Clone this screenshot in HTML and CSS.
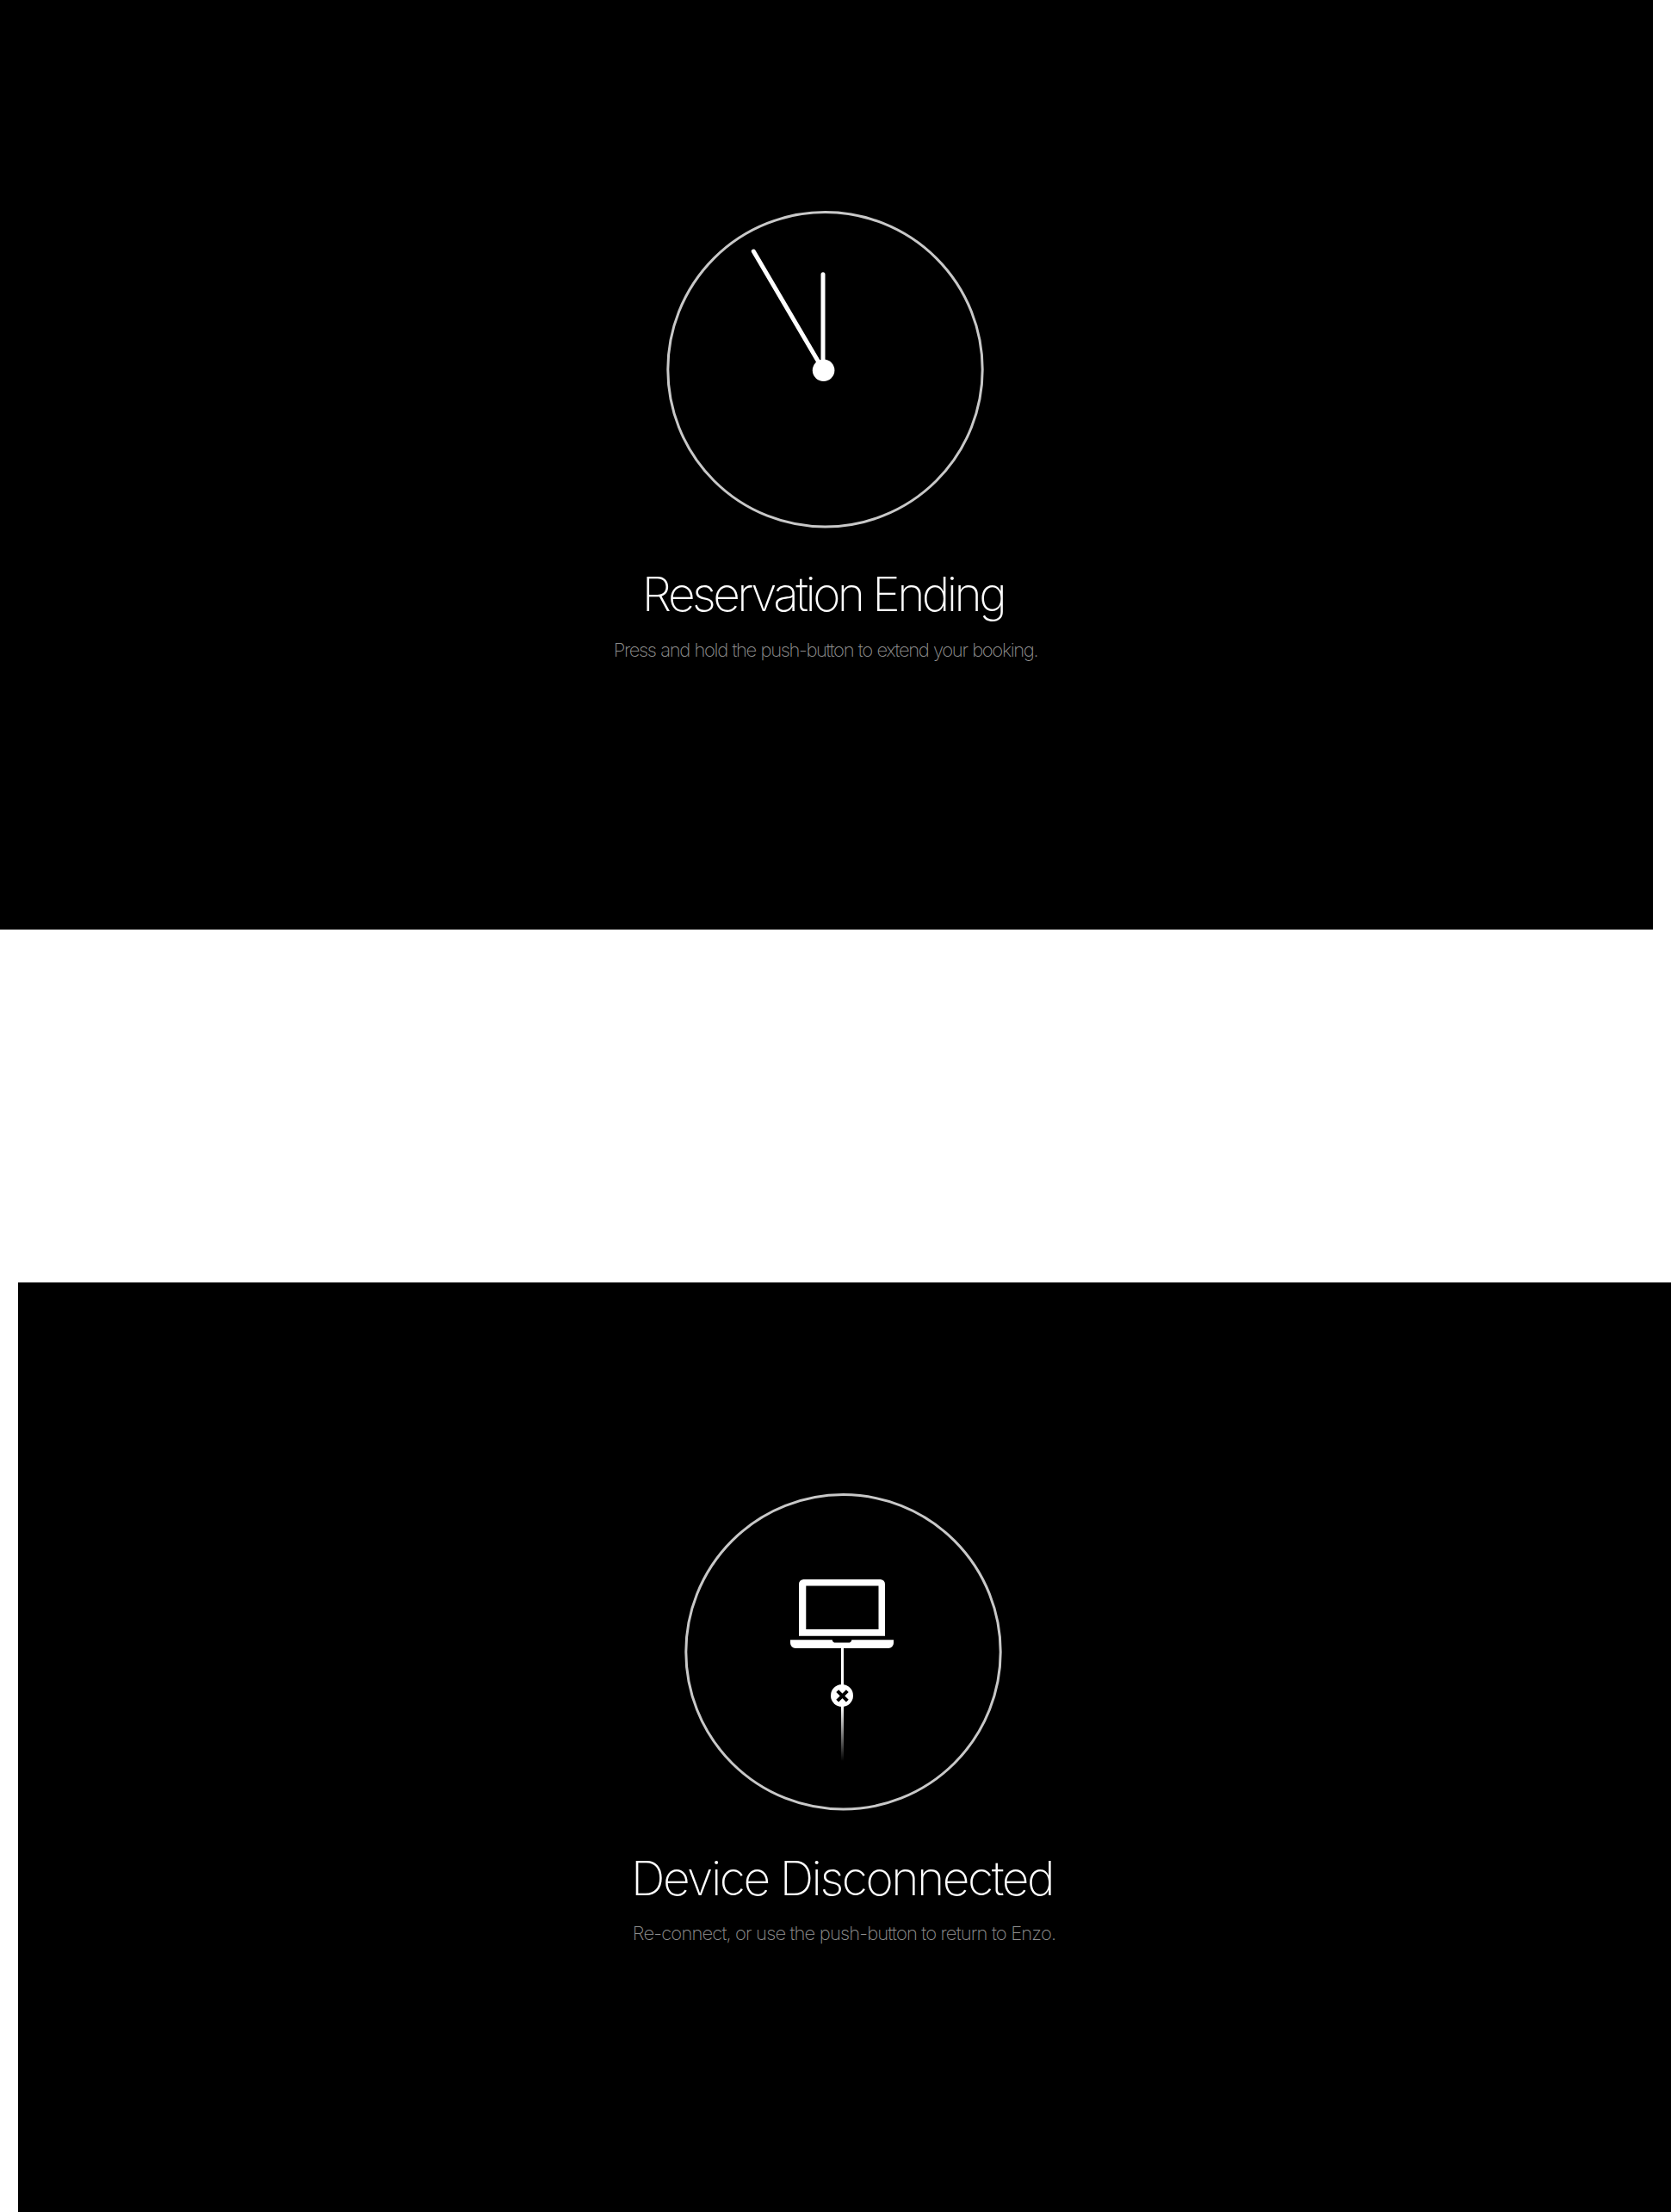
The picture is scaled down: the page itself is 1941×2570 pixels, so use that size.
FILE: index.html
```html
<!DOCTYPE html>
<html lang="en">
<head>
<meta charset="utf-8">
<title>Room display notices</title>
<link rel="stylesheet" href="styles.css">
</head>
<body>
<main class="screens">
  <section class="screen screen-ending">
    <svg class="dial" width="372" height="372" viewBox="0 0 372 372" aria-hidden="true">
      <circle class="ring" cx="185.5" cy="186.3" r="182.7"/>
      <path class="hand" d="M183 187V75.8M183.5 187.3L102.3 49"/>
      <circle cx="183.6" cy="187.3" r="12.8"/>
    </svg>
    <h1 class="title">Reservation Ending</h1>
    <p class="hint">Press and hold the push-button to extend your booking.</p>
  </section>
  <section class="screen screen-disconnected">
    <svg class="dial" width="372" height="372" viewBox="0 0 372 372" aria-hidden="true">
      <defs>
        <linearGradient id="fade" x1="0" y1="250" x2="0" y2="313" gradientUnits="userSpaceOnUse">
          <stop offset="0" stop-color="#fff"/>
          <stop offset="1" stop-color="#fff" stop-opacity="0"/>
        </linearGradient>
      </defs>
      <circle class="ring" cx="185.5" cy="186.3" r="182.7"/>
      <path fill-rule="evenodd" d="M139.5 102h89a5.5 5.5 0 0 1 5.5 5.5v60.2H134v-60.2a5.5 5.5 0 0 1 5.5-5.5zM142.3 109.4V160h84.2v-50.6z"/>
      <path d="M124 172.2h48.7q.5 3.4 4 3.4h14.6q3.5 0 4-3.4H244v3.8a6 6 0 0 1-6 6H130a6 6 0 0 1-6-6z"/>
      <rect x="183" y="181" width="3" height="45"/>
      <rect x="183" y="248" width="3" height="65" fill="url(#fade)"/>
      <circle cx="184" cy="237" r="13"/>
      <path class="cross" d="M178.7 231.6l11.6 11.6M190.3 231.6l-11.6 11.6"/>
    </svg>
    <h1 class="title">Device Disconnected</h1>
    <p class="hint">Re-connect, or use the push-button to return to Enzo.</p>
  </section>
</main>
</body>
</html>
```
FILE: styles.css
```css
* { box-sizing: border-box; }
body { margin: 0; background: #fff; }
.screens {
  display: flex;
  flex-direction: column;
  justify-content: space-between;
  width: 1941px;
  height: 2570px;
}
.screen {
  display: flex;
  flex-direction: column;
  align-items: center;
  width: 1920px;
  height: 1080px;
  padding-top: 243px;
  background: #000;
  font-family: Inter, "Liberation Sans", sans-serif;
}
.screen-disconnected { align-self: flex-end; }
.dial {
  display: block;
  flex: none;
  margin-right: 2px;
  fill: #fff;
}
.ring { fill: none; stroke: #c8c8c8; stroke-width: 3; }
.hand { fill: none; stroke: #fff; stroke-width: 5; stroke-linecap: round; }
.cross { fill: none; stroke: #000; stroke-width: 4; }
.title {
  margin: 45px 0 0;
  color: #fff;
  font-size: 55px;
  font-weight: 200;
  line-height: 60px;
  white-space: nowrap;
}
.hint {
  margin: 20px 0 0;
  color: #909090;
  font-size: 22px;
  font-weight: 200;
  line-height: 30px;
  white-space: nowrap;
}
.screen-ending .title { margin-right: 8px; letter-spacing: -3.6px; }
.screen-ending .hint { margin-right: 2px; letter-spacing: -1.36px; word-spacing: 0.8px; }
.screen-disconnected .title { margin: 47px 6px 0 0; letter-spacing: -2.45px; }
.screen-disconnected .hint { margin: 19px 1px 0 0; letter-spacing: -0.86px; }
```
